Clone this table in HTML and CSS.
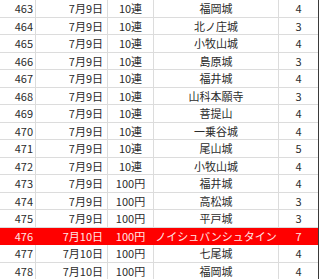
FILE: index.html
```html
<!DOCTYPE html>
<html lang="ja">
<head>
<meta charset="utf-8">
<link rel="stylesheet" href="styles.css">
</head>
<body>
<div class="sheet">
  <div class="row"><div class="c num">463</div><div class="c date">7月9日</div><div class="c type">10連</div><div class="c name">福岡城</div><div class="c val">4</div></div>
  <div class="row"><div class="c num">464</div><div class="c date">7月9日</div><div class="c type">10連</div><div class="c name">北ノ庄城</div><div class="c val">3</div></div>
  <div class="row"><div class="c num">465</div><div class="c date">7月9日</div><div class="c type">10連</div><div class="c name">小牧山城</div><div class="c val">4</div></div>
  <div class="row"><div class="c num">466</div><div class="c date">7月9日</div><div class="c type">10連</div><div class="c name">島原城</div><div class="c val">3</div></div>
  <div class="row"><div class="c num">467</div><div class="c date">7月9日</div><div class="c type">10連</div><div class="c name">福井城</div><div class="c val">4</div></div>
  <div class="row"><div class="c num">468</div><div class="c date">7月9日</div><div class="c type">10連</div><div class="c name">山科本願寺</div><div class="c val">3</div></div>
  <div class="row"><div class="c num">469</div><div class="c date">7月9日</div><div class="c type">10連</div><div class="c name">菩提山</div><div class="c val">4</div></div>
  <div class="row"><div class="c num">470</div><div class="c date">7月9日</div><div class="c type">10連</div><div class="c name">一乗谷城</div><div class="c val">4</div></div>
  <div class="row"><div class="c num">471</div><div class="c date">7月9日</div><div class="c type">10連</div><div class="c name">尾山城</div><div class="c val">5</div></div>
  <div class="row"><div class="c num">472</div><div class="c date">7月9日</div><div class="c type">10連</div><div class="c name">小牧山城</div><div class="c val">4</div></div>
  <div class="row"><div class="c num">473</div><div class="c date">7月9日</div><div class="c type">100円</div><div class="c name">福井城</div><div class="c val">4</div></div>
  <div class="row"><div class="c num">474</div><div class="c date">7月9日</div><div class="c type">100円</div><div class="c name">高松城</div><div class="c val">3</div></div>
  <div class="row"><div class="c num">475</div><div class="c date">7月9日</div><div class="c type">100円</div><div class="c name">平戸城</div><div class="c val">3</div></div>
  <div class="row hl"><div class="c num">476</div><div class="c date">7月10日</div><div class="c type">100円</div><div class="c name">ノイシュバンシュタイン</div><div class="c val">7</div></div>
  <div class="row"><div class="c num">477</div><div class="c date">7月10日</div><div class="c type">100円</div><div class="c name">七尾城</div><div class="c val">4</div></div>
  <div class="row"><div class="c num">478</div><div class="c date">7月10日</div><div class="c type">100円</div><div class="c name">福岡城</div><div class="c val">4</div></div>
</div>
</body>
</html>
```
FILE: styles.css
```css
html, body {
  margin: 0;
  padding: 0;
  background: #ffffff;
}
.sheet {
  width: 319px;
  box-sizing: border-box;
  border-right: 1px solid #3a3a3a;
  font-family: "Noto Sans CJK JP", "Noto Sans", sans-serif;
  font-size: 11px;
  color: #2b2b2b;
}
.row {
  display: grid;
  grid-template-columns: 36px 72px 46px 125px 39px;
  height: 17.5px;
}
.c {
  box-sizing: border-box;
  border-right: 1px solid #dcdcdc;
  border-bottom: 1px solid #dcdcdc;
  line-height: 16.5px;
  white-space: nowrap;
  overflow: hidden;
}
.c.val {
  border-right: none;
}
.num {
  text-align: right;
  padding-right: 2px;
}
.date {
  text-align: right;
  padding-right: 4px;
}
.type, .name, .val {
  text-align: center;
}
.row.hl {
  background: #ff0000;
  color: #ffe6e6;
}
.row.hl .c {
  border-color: #ff0000;
}
```
